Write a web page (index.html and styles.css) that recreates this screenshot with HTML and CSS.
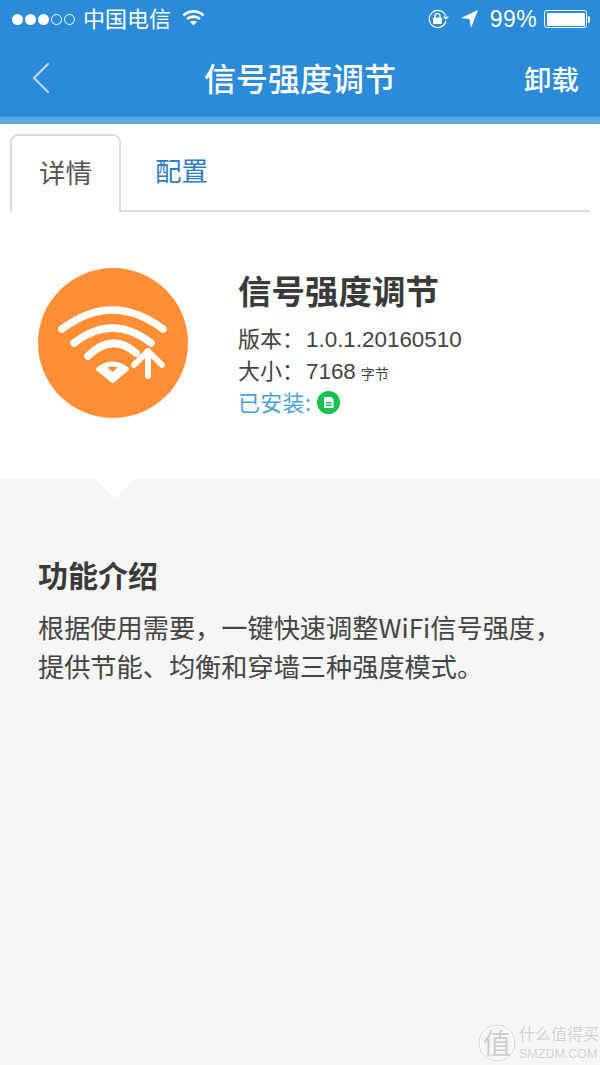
FILE: index.html
```html
<!DOCTYPE html>
<html lang="zh">
<head>
<meta charset="utf-8">
<title>信号强度调节</title>
<link rel="stylesheet" href="styles.css">
</head>
<body>
<div class="page">
  <header class="header">
    <div class="status">
      <div class="status-left">
        <span class="signal"><i class="dot"></i><i class="dot"></i><i class="dot"></i><i class="dot off"></i><i class="dot off"></i></span>
        <span class="carrier">中国电信</span>
        <svg class="wifi" width="23" height="18" viewBox="0 0 23 18"><path d="M1.500 6.500C7 1 16 1 21.500 6.500" class="wf"/><path d="M5 10c3.500-3.200 9.500-3.200 13 0" class="wf"/><path d="M11.500 16.500 8 12.800c2-1.500 5-1.500 7 0z" fill="#fff"/></svg>
      </div>
      <div class="status-right">
        <svg class="lock" width="23" height="20" viewBox="0 0 23 20"><path d="M18.500 6.500A8.500 8.500 0 1 0 19 12" class="thin"/><path d="M16 7.500h6l-3 3.500z" fill="#fff"/><rect x="6" y="8.500" width="9" height="6.500" rx="1" fill="#fff"/><path d="M8 8.500V7a2.500 2.500 0 0 1 5 0v1.500" class="thin"/></svg>
        <svg class="arrow" width="17" height="18" viewBox="0 0 17 18"><path d="M17 0 0 8l8.500 1 1.500 9z" fill="#fff"/></svg>
        <span class="pct">99%</span>
        <span class="battery"><span class="battery-fill"></span></span><span class="battery-tip"></span>
      </div>
    </div>
    <nav class="nav">
      <svg class="back" width="18" height="30" viewBox="0 0 18 30"><path d="M16 1 2 15l14 14" /></svg>
      <h1 class="nav-title">信号强度调节</h1>
      <span class="nav-action">卸载</span>
    </nav>
  </header>
  <div class="band"></div>

  <main class="detail">
    <div class="tabs">
      <div class="tab active">详情</div>
      <div class="tab second">配置</div>
    </div>
    <section class="app">
      <svg class="app-icon" width="150" height="150" viewBox="0 0 150 150">
        <circle cx="75" cy="75" r="75" fill="#ff8e35"/>
        <path class="ws" d="M24 61Q74.500 23 125 61"/>
        <path class="ws" d="M36 75Q74.500 45 113 75"/>
        <path class="ws" d="M50 88Q74 64 98 85"/>
        <path class="diamond" d="M74.500 113 60 101Q74.500 90 89 101z"/>
        <path d="M74.500 104 69 99.500Q74.500 97.500 80 99.500z" fill="#ff8e35"/>
        <path class="ws arrow-up" d="M110 108V83M96 97l14-14 14 14"/>
      </svg>
      <div class="app-info">
        <h2 class="app-name">信号强度调节</h2>
        <p class="meta">版本：<span class="num">1.0.1.20160510</span></p>
        <p class="meta">大小：<span class="num">7168</span> <small class="unit">字节</small></p>
        <p class="meta installed">已安装:<svg class="sd" width="23" height="23" viewBox="0 0 23 23"><circle cx="11.500" cy="11.500" r="11.500" fill="#18c24f"/><path d="M7 6h7l2.500 2.500V17H7z" fill="#fff"/><path d="M9 11h5.500v4H9z" fill="#18c24f"/><path d="M9 13h5.500" stroke="#fff" stroke-width="1"/></svg></p>
      </div>
    </section>
    <section class="intro">
      <span class="notch"></span>
      <h3 class="intro-title">功能介绍</h3>
      <p class="intro-text">根据使用需要，一键快速调整WiFi信号强度，<br>提供节能、均衡和穿墙三种强度模式。</p>
      <div class="watermark">
        <svg class="wm-logo" width="42" height="42" viewBox="0 0 42 42"><circle cx="21" cy="21" r="18" fill="none" stroke="#fff" stroke-width="3"/><circle cx="21" cy="21" r="18" fill="none" stroke="#cfcfcf" stroke-width="1"/></svg>
        <span class="wm-glyph">值</span>
        <div class="wm-text"><span class="wm-cn">什么值得买</span><span class="wm-en">SMZDM.COM</span></div>
      </div>
    </section>
  </main>
</div>
</body>
</html>
```
FILE: styles.css
```css
*, *::before, *::after { box-sizing: border-box; }
html, body { margin: 0; padding: 0; }
body { width: 600px; height: 1065px; overflow: hidden; background: #f6f6f6; font-family: "Noto Sans CJK SC", "Liberation Sans", sans-serif; color: #3c3c3c; }
h1, h2, h3, p { margin: 0; }
.page { width: 600px; height: 1065px; display: flex; flex-direction: column; }

.header { height: 117px; background: #2b8bd8; color: #fff; flex: none; }
.band { height: 7px; background: linear-gradient(#5aa6da, #66aedd); flex: none; }
.status { height: 40px; padding: 0 10px 2px 12px; display: flex; justify-content: space-between; align-items: center; }
.status-left, .status-right { display: flex; align-items: center; }
.signal { display: flex; gap: 2px; margin-right: 8px; }
.dot { width: 11px; height: 11px; border-radius: 50%; background: #fff; display: block; }
.dot.off { background: none; border: 1px solid #fff; }
.carrier { font-size: 22px; line-height: 26px; margin-right: 11px; margin-bottom: 5px; }
.wifi { margin-bottom: 2px; }
.wf { fill: none; stroke: #fff; stroke-width: 2.600; }
.thin { fill: none; stroke: #fff; stroke-width: 1.300; }
.lock { margin-right: 11px; }
.arrow { margin-right: 12px; }
.pct { font-family: "Liberation Sans", sans-serif; font-size: 23px; margin-right: 7px; letter-spacing: .4px; }
.battery { width: 43px; height: 18px; border: 1px solid #fff; border-radius: 3px; padding: 1.500px; display: block; }
.battery-fill { display: block; width: 100%; height: 100%; background: #fff; border-radius: 1px; }
.battery-tip { width: 2px; height: 7px; background: #fff; margin-left: 1px; border-radius: 0 2px 2px 0; }

.nav { height: 77px; padding: 0 21px 0 32px; display: flex; align-items: center; justify-content: space-between; position: relative; }
.back { fill: none; stroke: #c5dcef; stroke-width: 2; margin-bottom: 1px; }
.back path { stroke-linecap: round; }
.nav-title { font-size: 32px; font-weight: 500; line-height: 40px; position: absolute; left: 204px; top: 17px; }
.nav-action { font-size: 27.500px; font-weight: 500; line-height: 36px; margin-bottom: 1px; }

.detail { flex: 1; display: flex; flex-direction: column; }
.tabs { height: 88px; background: #fff; padding: 10px 10px 0 10px; display: flex; }
.tabs::after { content: ""; flex: 1; height: 78px; border-bottom: 2px solid #dcdcdc; }
.tab { width: 111px; height: 78px; font-size: 26.500px; line-height: 72px; text-align: center; color: #2f7cc2; border-bottom: 2px solid #dcdcdc; }
.tab.second { width: 121px; }
.tab.active { color: #555; border: 2px solid #dcdcdc; border-bottom: 0; border-radius: 8px 8px 0 0; line-height: 72px; background: #fff; }

.app { height: 267px; background: #fff; padding: 56px 0 0 38px; display: flex; gap: 50px; }
.app-icon { flex: none; }
.ws { fill: none; stroke: #fff; stroke-width: 7.500; stroke-linecap: round; stroke-linejoin: round; }
.arrow-up { stroke-width: 6; }
.diamond { fill: #fff; stroke: #fff; stroke-width: 4; stroke-linejoin: round; }
.app-name { font-size: 33.500px; line-height: 46px; font-weight: 700; color: #3a3a3a; margin-bottom: 8px; margin-top: -1px; }
.meta { font-size: 22px; line-height: 32px; height: 32px; color: #444; white-space: pre; }
.num { font-family: "Liberation Sans", sans-serif; font-size: 22.400px; margin-left: 2px; }
.unit { font-size: 14px; line-height: 14px; }
.installed { color: #4aa3dc; display: flex; align-items: center; letter-spacing: .3px; }
.sd { margin-left: 6px; margin-top: 2px; flex: none; }

.intro { flex: 1; position: relative; padding: 73px 38px 0; background: #f6f6f6; }
.notch { position: absolute; left: 95px; top: 0; border-left: 20px solid transparent; border-right: 20px solid transparent; border-top: 20px solid #fff; }
.intro-title { font-size: 30px; line-height: 44px; font-weight: 700; color: #3a3a3a; margin-bottom: 12px; }
.intro-text { font-size: 26.200px; line-height: 38.500px; color: #444; white-space: nowrap; }

.watermark { position: absolute; left: 476px; top: 543px; width: 124px; height: 42px; display: flex; gap: 1px; }
.wm-logo { flex: none; }
.wm-glyph { position: absolute; left: 7px; top: 1px; font-size: 28px; line-height: 38px; color: #cdcdcd; text-shadow: 0 0 2px #fff; }
.wm-text { display: flex; flex-direction: column; text-shadow: 0 0 2px #fff, 0 0 2px #fff; }
.wm-cn { font-size: 16px; line-height: 22px; color: #cfcfcf; white-space: nowrap; }
.wm-en { font-family: "Liberation Sans", sans-serif; font-size: 12.500px; line-height: 16px; margin-top: 2px; color: #cfcfcf; }
```
